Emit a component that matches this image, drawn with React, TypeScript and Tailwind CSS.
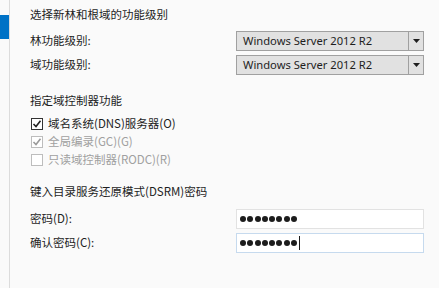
import React from "react";

const font = { fontFamily: '"Noto Sans CJK SC", "Noto Sans", sans-serif' };
const latin = { fontFamily: '"Noto Sans", sans-serif' };

function Dropdown() {
  return (
    <div className="flex h-[20px] w-[188px] border border-[#a0a0a0] bg-[#e1e1e1]">
      <div className="flex flex-1 items-center pl-[6px] text-[11.2px] leading-none text-[#1e1e1e]" style={latin}>
        Windows Server 2012 R2
      </div>
      <div className="flex w-[15px] items-center justify-center border-l border-[#a0a0a0]">
        <svg width="7" height="4" viewBox="0 0 7 4">
          <path d="M0 0 L7 0 L3.5 4 Z" fill="#1e1e1e" />
        </svg>
      </div>
    </div>
  );
}

function Dots({ caret }: { caret?: boolean }) {
  return (
    <div className="flex items-center gap-[1.3px] pl-[3px]">
      {Array.from({ length: 8 }).map((_, i) => (
        <span key={i} className="block h-[6px] w-[6px] rounded-full bg-[#1c1c1c]" />
      ))}
      {caret && <span className="ml-[1px] block h-[14px] w-[1px] bg-[#1c1c1c]" />}
    </div>
  );
}

function Check({ checked, disabled, label }: { checked: boolean; disabled?: boolean; label: string }) {
  const border = disabled ? "border-[#bdbdbd]" : "border-[#333333]";
  const stroke = disabled ? "#9a9a9a" : "#222222";
  return (
    <div className="flex h-[18px] items-center">
      <div className={`ml-[1px] flex h-[12px] w-[12px] items-center justify-center border bg-white ${border}`}>
        {checked && (
          <svg width="10" height="10" viewBox="0 0 10 10">
            <path d="M1.5 5 L4 7.5 L8.5 1.8" fill="none" stroke={stroke} strokeWidth="1.6" />
          </svg>
        )}
      </div>
      <span className={`ml-[5px] leading-none ${disabled ? "text-[#a0a0a0]" : "text-[#1e1e1e]"}`}>{label}</span>
    </div>
  );
}

export default function App() {
  return (
    <div className="flex h-[288px] w-[439px] overflow-hidden bg-[#fafafa]" style={font}>
      <div className="w-[10px] shrink-0 border-r border-[#dcdcdc] bg-[#fafafa]">
        <div className="mt-[15px] h-[24px] w-[9px] bg-[#0072c6]" />
      </div>
      <div className="flex flex-1 flex-col pl-[20px] pt-[5px] text-[11.5px] leading-none text-[#1e1e1e]">
        <div className="flex h-[20px] items-center">选择新林和根域的功能级别</div>
        <div className="mt-[6px] flex h-[20px] items-center">
          <div className="w-[206px]">林功能级别:</div>
          <Dropdown />
        </div>
        <div className="mt-[4px] flex h-[20px] items-center">
          <div className="w-[206px]">域功能级别:</div>
          <Dropdown />
        </div>
        <div className="mt-[16px] flex h-[20px] items-center">指定域控制器功能</div>
        <div className="mt-[4px] flex flex-col">
          <Check checked label="域名系统(DNS)服务器(O)" />
          <Check checked disabled label="全局编录(GC)(G)" />
          <Check checked={false} disabled label="只读域控制器(RODC)(R)" />
        </div>
        <div className="mt-[13px] flex h-[20px] items-center">键入目录服务还原模式(DSRM)密码</div>
        <div className="mt-[7px] flex h-[20px] items-center">
          <div className="w-[206px]">密码(D):</div>
          <div className="flex h-[20px] w-[188px] items-center border border-[#e2e2e2] bg-white">
            <Dots />
          </div>
        </div>
        <div className="mt-[4px] flex h-[20px] items-center">
          <div className="w-[206px]">确认密码(C):</div>
          <div className="flex h-[20px] w-[188px] items-center border border-[#c6daee] bg-white">
            <Dots caret />
          </div>
        </div>
      </div>
    </div>
  );
}
